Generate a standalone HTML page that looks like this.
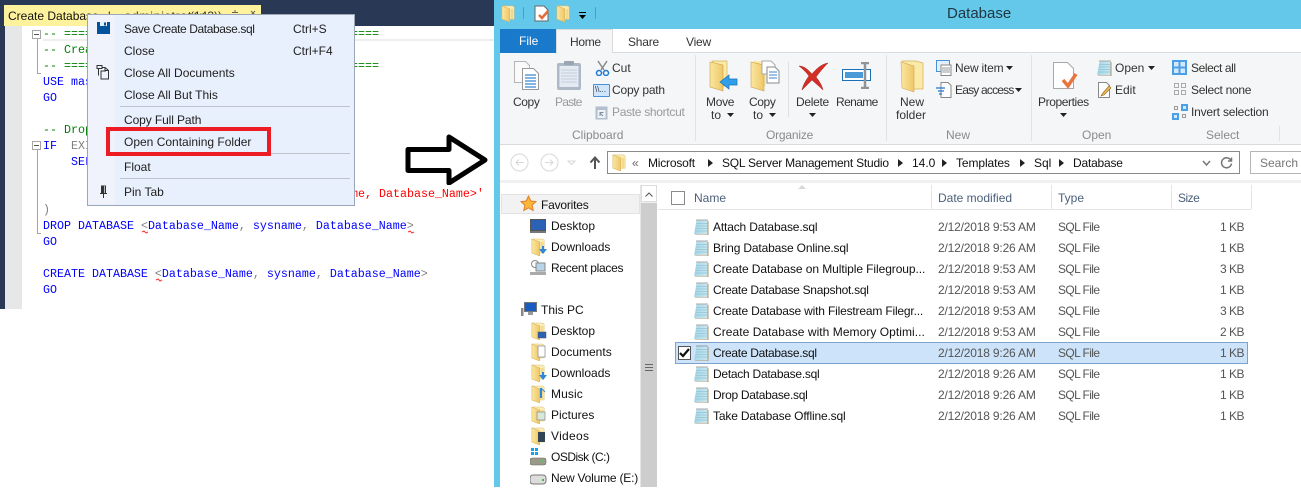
<!DOCTYPE html>
<html><head><meta charset="utf-8">
<style>
html,body{margin:0;padding:0;background:#fff}
#r{position:relative;width:1301px;height:493px;overflow:hidden;background:#fff;font-family:"Liberation Sans",sans-serif;font-size:12px;color:#1e1e1e}
#r div,#r span.t,#r svg.a{position:absolute}
.t{white-space:nowrap;line-height:16px}
.c{font-family:"Liberation Mono",monospace;font-size:11.67px;white-space:pre;line-height:16px;position:absolute;left:43px;color:#00f}
.g{color:#008000}.k{color:#00f}.p{color:#808080}.e{color:#f00}.b{color:#00f}
.m{color:#1e1e1e;font-size:12px}
.rb{color:#333;text-align:center}
.gr{color:#9a9a9a}
.lb{color:#8a8a8a}
.n{color:#111}
.h{color:#4c607a}
.d{color:#555;letter-spacing:-.18px}
.f{color:#555;letter-spacing:-.6px}
.z{color:#555;letter-spacing:-.5px;right:57px}
</style></head><body><div id="r">
<svg width="0" height="0" style="position:absolute"><defs>
<linearGradient id="fg" x1="0" x2="1"><stop offset="0" stop-color="#fbe6a0"/><stop offset="1" stop-color="#eec766"/></linearGradient>
<linearGradient id="sg" x1="0" x2="1"><stop offset="0" stop-color="#a6d6e6"/><stop offset="1" stop-color="#c9e6f0"/></linearGradient>
<symbol id="fo" viewBox="0 0 16 18" preserveAspectRatio="none"><path d="M1 1h12l2 1v13l-6 0z" fill="#fbeeb8" stroke="#dcc078" stroke-width=".6"/><path d="M1 1l9 3v14L1 15z" fill="url(#fg)" stroke="#d8b45e" stroke-width=".6"/><path d="M11 4h3v11h-3z" fill="#f4d98a"/></symbol>
<symbol id="sq" viewBox="0 0 16 16"><path d="M3.500 1.500h11v13.500H1z" fill="url(#sg)"/><path d="M3.300 4.500h11M3 7h11.300M2.500 9.500h11.800M2 12h12.300" stroke="#8fc5d8" stroke-width=".7"/><path d="M3.500 1h11" stroke="#555" stroke-dasharray="1 1"/><path d="M15 2v14H2" fill="none" stroke="#a8966e"/></symbol>
</defs></svg>

<!-- SSMS -->
<div style="left:0;top:0;width:494px;height:26px;background:#293955"></div>
<div style="left:0;top:0;width:5px;height:309px;background:#293955"></div>
<div style="left:4px;top:5px;width:257px;height:21px;background:#fff29d"></div>
<span class="t" style="left:8px;top:8px;color:#111">Create Database</span>
<span class="t" style="left:108px;top:8px;color:#333;letter-spacing:.8px">l - administrator</span>
<span class="t" style="left:190px;top:8px;color:#333">(143))</span>
<svg class="a" style="left:230px;top:10px" width="26" height="5" fill="none" stroke="#665"><path d="M2 2.500h6M5 0v3M21 1l4 4M25 1l-4 4"/></svg>
<div style="left:5px;top:26px;width:17px;height:283px;background:#e6e7e8"></div>
<div style="left:43px;top:26px;width:451px;height:15px;border-bottom:2px solid #eee;box-sizing:border-box"></div>
<div style="left:32px;top:30px;width:7px;height:7px;border:1px solid #a5a5a5;background:#fff"></div>
<div style="left:34px;top:34px;width:5px;height:1px;background:#555"></div>
<div style="left:37px;top:39px;width:1px;height:34px;background:#a5a5a5"></div>
<div style="left:37px;top:73px;width:4px;height:1px;background:#a5a5a5"></div>
<div style="left:32px;top:141px;width:7px;height:7px;border:1px solid #a5a5a5;background:#fff"></div>
<div style="left:34px;top:145px;width:5px;height:1px;background:#555"></div>
<div style="left:37px;top:150px;width:1px;height:83px;background:#a5a5a5"></div>
<div style="left:37px;top:233px;width:4px;height:1px;background:#a5a5a5"></div>
<div class="c g" style="top:26px">-- ====</div><div class="c g" style="top:26px;left:351px">====</div>
<div class="c g" style="top:42px">-- Crea</div>
<div class="c g" style="top:58px">-- ====</div><div class="c g" style="top:58px;left:351px">====</div>
<div class="c" style="top:74px">USE mas</div>
<div class="c" style="top:90px">GO</div>
<div class="c g" style="top:122px">-- Drop</div>
<div class="c" style="top:138px">IF  <span class="p">EXI</span></div>
<div class="c" style="top:154px">    SEL</div>
<div class="c e" style="top:186px;left:351px">me, Database_Name&gt;'</div>
<div class="c p" style="top:202px">)</div>
<div class="c" style="top:218px">DROP DATABASE <span class="p">&lt;</span>Database_Name<span class="p">,</span> sysname<span class="p">,</span> Database_Name<span class="p">&gt;</span></div>
<div class="c" style="top:234px">GO</div>
<div class="c" style="top:266px">CREATE DATABASE <span class="p">&lt;</span>Database_Name<span class="p">,</span> sysname<span class="p">,</span> Database_Name<span class="p">&gt;</span></div>
<div class="c" style="top:282px">GO</div>
<svg class="a" style="left:141px;top:230px" width="12" height="4"><path d="M1 2l2-1 2 2 2-1" stroke="#f33" fill="none"/></svg>
<svg class="a" style="left:407px;top:230px" width="12" height="4"><path d="M1 2l2-1 2 2 2-1" stroke="#f33" fill="none"/></svg>
<svg class="a" style="left:155px;top:278px" width="12" height="4"><path d="M1 2l2-1 2 2 2-1" stroke="#f33" fill="none"/></svg>

<!-- Context menu -->
<div style="left:87px;top:14px;width:266px;height:190px;background:#e9f0fd;border:1px solid #9ba7b7"></div>
<div style="left:88px;top:15px;width:27px;height:189px;background:#f0f3fc"></div>
<svg class="a" style="left:97px;top:22px" width="13" height="12" viewBox="0 0 13 12"><path d="M0 0h13v12H0z" fill="#00539c"/><path d="M3 0h7v4H3z" fill="#e9f0fd"/><path d="M7 .5h2v3H7z" fill="#00539c"/></svg>
<svg class="a" style="left:96px;top:64px" width="15" height="16" viewBox="0 0 15 16" fill="none" stroke="#333"><path d="M1 1.500h5v3H1z"/><path d="M2.500 4.500v7M6 1.500v2h3l3.500 3v8.500H5v-8h5M9 3.500v3h3.500"/></svg>
<span class="t m" style="left:124px;top:21px;letter-spacing:-.4px">Save Create Database.sql</span><span class="t m" style="left:293px;top:21px">Ctrl+S</span>
<span class="t m" style="left:124px;top:43px">Close</span><span class="t m" style="left:293px;top:43px">Ctrl+F4</span>
<span class="t m" style="left:124px;top:65px">Close All Documents</span>
<span class="t m" style="left:124px;top:87px">Close All But This</span>
<div style="left:120px;top:106px;width:230px;height:1px;background:#bec3cc"></div>
<span class="t m" style="left:124px;top:112px;letter-spacing:-.1px">Copy Full Path</span>
<span class="t m" style="left:124px;top:134px">Open Containing Folder</span>
<div style="left:120px;top:153px;width:230px;height:1px;background:#bec3cc"></div>
<span class="t m" style="left:124px;top:159px">Float</span>
<div style="left:120px;top:178px;width:230px;height:1px;background:#bec3cc"></div>
<span class="t m" style="left:124px;top:184px">Pin Tab</span>
<svg class="a" style="left:99px;top:185px" width="10" height="13" viewBox="0 0 10 13"><path d="M2 .5h5v8H2z" fill="#333"/><path d="M1 8h7v1H1zM4 9h1v4H4z" fill="#333"/><path d="M5 1h1v7H5z" fill="#bbb"/></svg>
<div style="left:106px;top:127px;width:165px;height:29px;border:4.500px solid #ed1c24;box-sizing:border-box"></div>

<!-- Arrow -->
<svg class="a" style="left:404px;top:133px" width="84" height="52" viewBox="0 0 84 52"><path d="M4 16.500h41V4l36 23-36 23V37.500H4z" fill="#fff" stroke="#000" stroke-width="5" stroke-linejoin="round"/></svg>

<!-- Explorer frame -->
<div style="left:494px;top:0;width:807px;height:29px;background:#63c8ea"></div>
<div style="left:494px;top:0;width:6px;height:487px;background:#63c8ea"></div>
<div style="left:500px;top:180px;width:801px;height:3px;background:#f0f0f0"></div>
<svg class="a" style="left:501px;top:5px" width="14" height="17"><use href="#fo" width="14" height="17"/></svg>
<div style="left:523px;top:7px;width:1px;height:12px;background:#6a95a6"></div>
<svg class="a" style="left:534px;top:5px" width="16" height="17" viewBox="0 0 16 17"><path d="M1 1h9l4 4v11H1z" fill="#fff" stroke="#666"/><path d="M5 10l3 3 6-7" fill="none" stroke="#e46b3c" stroke-width="2.500"/></svg>
<svg class="a" style="left:556px;top:5px" width="14" height="17"><use href="#fo" width="14" height="17"/></svg>
<div style="left:579px;top:12px;width:7px;height:1px;background:#000"></div>
<svg class="a" style="left:579px;top:15px" width="7" height="4"><path d="M0 0h7l-3.500 4z" fill="#000"/></svg>
<div style="left:595px;top:7px;width:1px;height:12px;background:#6a95a6"></div>
<span class="t" style="left:947px;top:5px;font-size:15px;line-height:18px;color:#1f3540">Database</span>

<!-- Tabs -->
<div style="left:500px;top:29px;width:56px;height:23px;background:#1979ca"></div>
<span class="t" style="left:519px;top:33px;color:#fff">File</span>
<div style="left:556px;top:29px;width:57px;height:24px;background:#f5f6f7;border:1px solid #dadbdc;border-bottom:0;box-sizing:border-box"></div>
<span class="t" style="left:570px;top:34px;color:#333;letter-spacing:-.3px">Home</span>
<span class="t" style="left:628px;top:34px;color:#333;letter-spacing:-.2px">Share</span>
<span class="t" style="left:686px;top:34px;color:#333;letter-spacing:-.2px">View</span>
<div style="left:500px;top:52px;width:56px;height:1px;background:#1979ca"></div>
<div style="left:613px;top:52px;width:688px;height:1px;background:#dadbdc"></div>
<div style="left:500px;top:53px;width:801px;height:91px;background:#f5f6f7;border-bottom:1px solid #dadbdc"></div>
<div style="left:695px;top:55px;width:1px;height:86px;background:#e2e3e4"></div>
<div style="left:886px;top:55px;width:1px;height:86px;background:#e2e3e4"></div>
<div style="left:1031px;top:55px;width:1px;height:86px;background:#e2e3e4"></div>
<div style="left:1279px;top:126px;width:1px;height:15px;background:#e2e3e4"></div>
<div style="left:788px;top:62px;width:1px;height:55px;background:#dfe0e1"></div>

<!-- Clipboard -->
<svg class="a" style="left:511px;top:60px" width="30" height="31" viewBox="0 0 30 31"><path d="M3.500 1.500h11l4 4v17h-15z" fill="#fafafa" stroke="#b5b5b5"/><path d="M11.500 8.500h11l5 5v16h-16z" fill="#fff" stroke="#999"/><path d="M14 15h11M14 18h11M14 21h11M14 24h11M14 27h11" stroke="#3a87cf" stroke-width="1.200"/></svg>
<span class="t rb" style="left:513px;top:94px;letter-spacing:-.4px">Copy</span>
<svg class="a" style="left:556px;top:60px" width="26" height="31" viewBox="0 0 26 31"><rect x="1" y="3" width="24" height="27" rx="2" fill="#aeb9c8"/><rect x="3.500" y="6" width="19" height="21" fill="#e4eaf2"/><path d="M5 10h16M5 13h16M5 16h16M5 19h16M5 22h16" stroke="#c4cfdc"/><rect x="8" y="1" width="10" height="4" rx="1" fill="#9aa5b2"/></svg>
<span class="t gr" style="left:555px;top:94px;letter-spacing:-.8px">Paste</span>
<svg class="a" style="left:595px;top:60px" width="15" height="16" viewBox="0 0 15 16" fill="none"><path d="M3 1l6 9M12 1L6 10" stroke="#8a8a8a" stroke-width="1.500"/><circle cx="4" cy="13" r="2.500" stroke="#1f78d1" stroke-width="1.500"/><circle cx="11" cy="13" r="2.500" stroke="#1f78d1" stroke-width="1.500"/></svg>
<span class="t rb" style="left:612px;top:60px">Cut</span>
<div style="left:593px;top:84px;width:15px;height:11px;background:#cfe5fb;border:1px solid #4a90d9;border-radius:1px"></div>
<span class="t" style="left:595px;top:82px;font-size:8px;color:#333">\\...</span>
<span class="t rb" style="left:612px;top:82px;letter-spacing:-.2px">Copy path</span>
<svg class="a" style="left:595px;top:105px" width="13" height="15" viewBox="0 0 13 15"><rect x=".5" y="1.500" width="12" height="13" fill="#b4bfcd"/><rect x="2.500" y="5" width="8" height="8" fill="#eef2f7"/><path d="M5 11V7.500h3.500M5 8l3 3" fill="none" stroke="#7d8ca0"/></svg>
<span class="t gr" style="left:612px;top:104px;letter-spacing:-.3px">Paste shortcut</span>
<span class="t lb" style="left:572px;top:127px">Clipboard</span>

<!-- Organize -->
<svg class="a" style="left:709px;top:60px" width="29" height="33" viewBox="0 0 29 33"><path d="M3 1h15v25H9z" fill="#fbe9a8" stroke="#d5b05c" stroke-width=".7"/><path d="M1 2l13 3v26L1 27z" fill="url(#fg)" stroke="#c9a04a" stroke-width=".6"/><path d="M11 22l9-7v4h8v6h-8v4z" fill="#2e9fe8" stroke="#1b71b8" stroke-width=".7"/></svg>
<span class="t rb" style="left:706px;top:94px;letter-spacing:-.3px">Move</span><span class="t rb" style="left:711px;top:107px">to</span>
<svg class="a" style="left:727px;top:113px" width="7" height="4"><path d="M0 0h7L3.500 4z" fill="#222"/></svg>
<svg class="a" style="left:750px;top:60px" width="30" height="33" viewBox="0 0 30 33"><path d="M3 1h13v25H9z" fill="#fbe9a8"/><path d="M1 2l13 3v26L1 27z" fill="url(#fg)" stroke="#c9a04a" stroke-width=".6"/><path d="M12 1h9l4 4v9H12z" fill="#fff" stroke="#aaa"/><path d="M17 7h8l4 4v12H17z" fill="#fff" stroke="#8a8a8a"/><path d="M19 12h8M19 15h8M19 18h8" stroke="#3a87cf"/></svg>
<span class="t rb" style="left:749px;top:94px;letter-spacing:-.4px">Copy</span><span class="t rb" style="left:753px;top:107px">to</span>
<svg class="a" style="left:769px;top:113px" width="7" height="4"><path d="M0 0h7L3.500 4z" fill="#222"/></svg>
<svg class="a" style="left:797px;top:61px" width="32" height="30" viewBox="0 0 32 30"><path d="M2 5C8 5 12 10 15 13 20 7 25 3 31 2 26 7 22 12 19 16 23 21 25 25 26 29 22 25 18 22 15 19 11 23 8 26 5 29 6 24 9 19 12 15 9 11 6 8 2 5z" fill="#d32f26" stroke="#a3231c" stroke-width=".5"/></svg>
<span class="t rb" style="left:796px;top:94px;letter-spacing:-.3px">Delete</span>
<svg class="a" style="left:809px;top:113px" width="7" height="4"><path d="M0 0h7L3.500 4z" fill="#222"/></svg>
<svg class="a" style="left:842px;top:62px" width="30" height="27" viewBox="0 0 30 27"><rect x=".5" y="7.500" width="28" height="11" fill="#fff" stroke="#1b71b8"/><rect x="3" y="10" width="18" height="6" fill="#4a9ad8"/><path d="M19 1h8M19 26h8M23 1v25" stroke="#8f9499" stroke-width="2.500" fill="none"/></svg>
<span class="t rb" style="left:836px;top:94px;letter-spacing:-.6px">Rename</span>
<span class="t lb" style="left:766px;top:127px;letter-spacing:-.2px">Organize</span>

<!-- New -->
<svg class="a" style="left:900px;top:60px" width="25" height="33" viewBox="0 0 25 33"><path d="M2 1h14l7 2v26H10z" fill="#fbe9a8" stroke="#d5b05c" stroke-width=".7"/><path d="M1 2l13 4v26L2 28z" fill="url(#fg)" stroke="#c9a04a" stroke-width=".5"/></svg>
<span class="t rb" style="left:900px;top:94px">New</span><span class="t rb" style="left:896px;top:107px">folder</span>
<svg class="a" style="left:936px;top:60px" width="16" height="16" viewBox="0 0 16 16"><rect x=".5" y=".5" width="13" height="11" fill="#e2f0fc" stroke="#4a90d9"/><path d="M5 5h10v10.500H5z" fill="#fff" stroke="#888"/><path d="M6 8h8M6 10h8M6 12h8" stroke="#999"/></svg>
<span class="t rb" style="left:955px;top:60px;letter-spacing:-.2px">New item</span>
<svg class="a" style="left:1006px;top:66px" width="7" height="4"><path d="M0 0h7L3.500 4z" fill="#222"/></svg>
<svg class="a" style="left:936px;top:82px" width="16" height="16" viewBox="0 0 16 16"><path d="M5 .5h7l3 3v12H5z" fill="#fff" stroke="#888"/><path d="M0 6h9M2 9h6M3 12h3" stroke="#1f78d1" stroke-width="1.200"/></svg>
<span class="t rb" style="left:955px;top:82px;letter-spacing:-.8px">Easy access</span>
<svg class="a" style="left:1015px;top:88px" width="7" height="4"><path d="M0 0h7L3.500 4z" fill="#222"/></svg>
<span class="t lb" style="left:946px;top:127px">New</span>

<!-- Open -->
<svg class="a" style="left:1052px;top:61px" width="26" height="30" viewBox="0 0 26 30"><path d="M1.500 1.500h14l6 6v20h-20z" fill="#fff" stroke="#a8a8a8"/><path d="M11 19l5 6 8-12" fill="none" stroke="#e8743e" stroke-width="3.500"/></svg>
<span class="t rb" style="left:1038px;top:94px;letter-spacing:-.4px">Properties</span>
<svg class="a" style="left:1060px;top:113px" width="7" height="4"><path d="M0 0h7L3.500 4z" fill="#222"/></svg>
<svg class="a" style="left:1096px;top:60px" width="16" height="16"><use href="#sq" width="16" height="16"/></svg>
<span class="t rb" style="left:1115px;top:60px">Open</span>
<svg class="a" style="left:1148px;top:66px" width="7" height="4"><path d="M0 0h7L3.500 4z" fill="#222"/></svg>
<svg class="a" style="left:1097px;top:82px" width="15" height="16" viewBox="0 0 15 16"><path d="M1.500.5h8l3 3v12h-11z" fill="#fff" stroke="#888"/><path d="M5 12l7-8 2 2-7 7-3 1z" fill="#eeb84a" stroke="#8a6a2a" stroke-width=".6"/></svg>
<span class="t rb" style="left:1115px;top:82px">Edit</span>
<span class="t lb" style="left:1082px;top:127px">Open</span>

<!-- Select -->
<svg class="a" style="left:1172px;top:60px" width="15" height="15" viewBox="0 0 15 15"><rect width="15" height="15" fill="#4aa0e8"/><rect x="2" y="2" width="4.500" height="4.500" fill="#d5e9fb"/><rect x="8.500" y="2" width="4.500" height="4.500" fill="#d5e9fb"/><rect x="2" y="8.500" width="4.500" height="4.500" fill="#d5e9fb"/><rect x="8.500" y="8.500" width="4.500" height="4.500" fill="#d5e9fb"/></svg>
<span class="t rb" style="left:1191px;top:60px;letter-spacing:-.4px">Select all</span>
<svg class="a" style="left:1174px;top:83px" width="12" height="12" viewBox="0 0 12 12" fill="none" stroke="#aaa"><rect x=".5" y=".5" width="4" height="4"/><rect x="7.500" y=".5" width="4" height="4"/><rect x=".5" y="7.500" width="4" height="4"/><rect x="7.500" y="7.500" width="4" height="4"/></svg>
<span class="t rb" style="left:1191px;top:82px;letter-spacing:-.3px">Select none</span>
<svg class="a" style="left:1172px;top:104px" width="16" height="16" viewBox="0 0 16 16"><rect x="9" y="0" width="7" height="7" fill="#4aa0e8"/><rect x="0" y="9" width="7" height="7" fill="#4aa0e8"/><rect x="2" y="11" width="3" height="3" fill="#d5e9fb"/><rect x="11" y="2" width="3" height="3" fill="#d5e9fb"/><rect x="2.500" y="2.500" width="3" height="3" fill="none" stroke="#999"/><rect x="10.500" y="10.500" width="3" height="3" fill="none" stroke="#999"/></svg>
<span class="t rb" style="left:1191px;top:104px;letter-spacing:-.2px">Invert selection</span>
<span class="t lb" style="left:1206px;top:127px">Select</span>

<!-- Address -->
<svg class="a" style="left:510px;top:153px" width="70" height="19" viewBox="0 0 70 19" fill="none" stroke="#d8d8d8"><circle cx="9.500" cy="9.500" r="8.500"/><circle cx="39.500" cy="9.500" r="8.500"/><path d="M14 9.500H6M9 6.500l-3 3 3 3M35 9.500h8M40 6.500l3 3-3 3"/><path d="M58 8h7l-3.500 3.500z" fill="#fff"/></svg>
<svg class="a" style="left:589px;top:156px" width="12" height="13" viewBox="0 0 12 13"><path d="M6 13V2M1.500 6.500L6 1.500l4.500 5" fill="none" stroke="#555" stroke-width="2"/></svg>
<div style="left:607px;top:151px;width:633px;height:23px;background:#fff;border:1px solid #8a8a8a;box-sizing:border-box"></div>
<svg class="a" style="left:612px;top:154px" width="14" height="17"><use href="#fo" width="14" height="17"/></svg>
<span class="t" style="left:632px;top:155px;color:#666">«</span>
<span class="t n" style="left:648px;top:155px;letter-spacing:-.2px">Microsoft</span>
<span class="t n" style="left:722px;top:155px;letter-spacing:-.22px">SQL Server Management Studio</span>
<span class="t n" style="left:912px;top:155px">14.0</span>
<span class="t n" style="left:956px;top:155px;letter-spacing:-.1px">Templates</span>
<span class="t n" style="left:1034px;top:155px">Sql</span>
<span class="t n" style="left:1073px;top:155px;letter-spacing:-.2px">Database</span>
<svg class="a" style="left:708px;top:159px" width="8" height="8"><path d="M0 0l5 4-5 4z" fill="#222"/></svg>
<svg class="a" style="left:898px;top:159px" width="6" height="8"><path d="M0 0l5 4-5 4z" fill="#222"/></svg>
<svg class="a" style="left:942px;top:159px" width="6" height="8"><path d="M0 0l5 4-5 4z" fill="#222"/></svg>
<svg class="a" style="left:1020px;top:159px" width="6" height="8"><path d="M0 0l5 4-5 4z" fill="#222"/></svg>
<svg class="a" style="left:1059px;top:159px" width="6" height="8"><path d="M0 0l5 4-5 4z" fill="#222"/></svg>
<svg class="a" style="left:1202px;top:155px" width="32" height="15" viewBox="0 0 32 15" fill="none" stroke="#777"><path d="M1 6l3.500 4L8 6" stroke-width="1.500"/><path d="M29 5.500a5 5 0 1 0 .5 3M29.500 2.500v3.500H26" stroke-width="1.500"/></svg>
<div style="left:1250px;top:151px;width:60px;height:23px;background:#fff;border:1px solid #b5b5b5;box-sizing:border-box"></div>
<span class="t" style="left:1260px;top:155px;color:#777">Search D</span>

<!-- Nav pane -->
<div style="left:501px;top:194px;width:139px;height:20px;background:#f2f2f2;border:1px solid #e2e2e2;box-sizing:border-box"></div>
<svg class="a" style="left:520px;top:195px" width="17" height="17" viewBox="0 0 17 17"><path d="M8.500 1l2.300 5 5.200.6-3.900 3.500 1.100 5.400-4.700-2.700-4.700 2.700 1.100-5.400L1 6.600 6.200 6z" fill="#f9b73c" stroke="#e07f2a"/></svg>
<span class="t n" style="left:541px;top:197px;letter-spacing:-.2px">Favorites</span>
<svg class="a" style="left:530px;top:219px" width="16" height="14" viewBox="0 0 16 14"><rect x=".5" y=".5" width="15" height="11" fill="#2b62b5" stroke="#555"/><rect y="12" width="16" height="2" fill="#777"/></svg>
<span class="t n" style="left:551px;top:218px">Desktop</span>
<svg class="a" style="left:531px;top:238px" width="16" height="18" viewBox="0 0 16 18"><use href="#fo" width="14" height="18"/><path d="M8 11h3V8h2v3h3l-4 5z" fill="#2e86d8"/></svg>
<span class="t n" style="left:551px;top:239px">Downloads</span>
<svg class="a" style="left:530px;top:260px" width="16" height="15" viewBox="0 0 16 15"><circle cx="5" cy="4" r="3.500" fill="#fff" stroke="#888"/><rect x="6" y="3" width="9" height="8" fill="#b8d4e8" stroke="#888"/><rect y="12" width="16" height="3" fill="#aaa"/></svg>
<span class="t n" style="left:551px;top:260px;letter-spacing:-.3px">Recent places</span>
<svg class="a" style="left:520px;top:302px" width="17" height="15" viewBox="0 0 17 15"><rect x="4.500" y=".5" width="12" height="9" fill="#1a5dc0" stroke="#777"/><rect x="1" y="6" width="2.500" height="8" fill="#888"/><rect x="8" y="10" width="5" height="3" fill="#999"/></svg>
<span class="t n" style="left:541px;top:302px">This PC</span>
<svg class="a" style="left:531px;top:322px" width="16" height="18" viewBox="0 0 16 18"><use href="#fo" width="14" height="18"/><rect x="7" y="10" width="8" height="6" fill="#2b62b5" stroke="#555" stroke-width=".5"/></svg>
<span class="t n" style="left:551px;top:323px">Desktop</span>
<svg class="a" style="left:531px;top:343px" width="16" height="18" viewBox="0 0 16 18"><use href="#fo" width="14" height="18"/><rect x="7" y="3" width="7" height="11" fill="#fff" stroke="#888" stroke-width=".7"/></svg>
<span class="t n" style="left:551px;top:344px">Documents</span>
<svg class="a" style="left:531px;top:364px" width="16" height="18" viewBox="0 0 16 18"><use href="#fo" width="14" height="18"/><path d="M8 11h3V8h2v3h3l-4 5z" fill="#2e86d8"/></svg>
<span class="t n" style="left:551px;top:365px">Downloads</span>
<svg class="a" style="left:531px;top:385px" width="16" height="18" viewBox="0 0 16 18"><use href="#fo" width="14" height="18"/><path d="M10 3v10" stroke="#2e86d8" stroke-width="2"/><path d="M10 3l4 4" stroke="#2e86d8"/></svg>
<span class="t n" style="left:551px;top:386px;letter-spacing:.1px">Music</span>
<svg class="a" style="left:531px;top:406px" width="16" height="18" viewBox="0 0 16 18"><use href="#fo" width="14" height="18"/><rect x="6" y="6" width="8" height="8" fill="#d8e8d8" stroke="#888" stroke-width=".7"/></svg>
<span class="t n" style="left:551px;top:407px">Pictures</span>
<svg class="a" style="left:531px;top:427px" width="16" height="18" viewBox="0 0 16 18"><use href="#fo" width="14" height="18"/><rect x="7" y="5" width="7" height="10" fill="#345"/></svg>
<span class="t n" style="left:551px;top:428px;letter-spacing:.3px">Videos</span>
<svg class="a" style="left:530px;top:447px" width="17" height="19" viewBox="0 0 17 19"><path d="M1 1h3v3H1zM5 1h3v3H5zM1 5h3v3H1zM5 5h3v3H5z" fill="#0ea5e9"/><rect y="11" width="16" height="7" rx="2" fill="#9a9a8a" stroke="#666" stroke-width=".5"/><rect x="11" y="13" width="3" height="2" fill="#5c5"/></svg>
<span class="t n" style="left:551px;top:449px;letter-spacing:-.5px">OSDisk (C:)</span>
<svg class="a" style="left:530px;top:473px" width="17" height="12" viewBox="0 0 17 12"><rect y="2" width="16" height="9" rx="3" fill="#ddd" stroke="#777"/><rect x="12" y="6" width="2" height="2" fill="#5a5"/></svg>
<span class="t n" style="left:551px;top:470px;letter-spacing:-.2px">New Volume (E:)</span>
<!-- Scrollbar -->
<div style="left:640px;top:185px;width:17px;height:302px;background:#f0f0f0;border-left:1px solid #e5e5e5;box-sizing:border-box"></div>
<div style="left:641px;top:185px;width:16px;height:17px;background:#fff;border:1px solid #dcdcdc;box-sizing:border-box"></div>
<svg class="a" style="left:645px;top:192px" width="8" height="5"><path d="M.5 4.500l3.500-3.500 3.500 3.500" fill="none" stroke="#555"/></svg>
<div style="left:641px;top:203px;width:16px;height:284px;background:#cdcdcd"></div>
<div style="left:645px;top:364px;width:8px;height:1px;background:#666;box-shadow:0 3px 0 #666,0 6px 0 #666"></div>

<!-- File list -->
<div style="left:658px;top:185px;width:593px;height:24px;background:#fff;border-bottom:1px solid #e5e5e5"></div>
<div style="left:931px;top:185px;width:1px;height:24px;background:#e5e5e5"></div>
<div style="left:1051px;top:185px;width:1px;height:24px;background:#e5e5e5"></div>
<div style="left:1171px;top:185px;width:1px;height:24px;background:#e5e5e5"></div>
<div style="left:1251px;top:185px;width:1px;height:24px;background:#e5e5e5"></div>
<div style="left:671px;top:191px;width:12px;height:12px;border:1px solid #8a8a8a;background:#fff"></div>
<svg class="a" style="left:798px;top:185px" width="8" height="5"><path d="M0 4l4-4 4 4z" fill="#d8d8d8"/></svg>
<span class="t h" style="left:694px;top:190px">Name</span>
<span class="t h" style="left:938px;top:190px">Date modified</span>
<span class="t h" style="left:1058px;top:190px">Type</span>
<span class="t h" style="left:1178px;top:190px;letter-spacing:-.5px">Size</span>
<div style="left:675px;top:342px;width:573px;height:22px;background:#cce3f9;border:1px solid #7da2ce;box-sizing:border-box"></div>
<div style="left:678px;top:346px;width:11px;height:12px;border:1px solid #555;background:#fff"></div>
<svg class="a" style="left:679px;top:348px" width="12" height="10"><path d="M1 5l3 3 6-7" fill="none" stroke="#111" stroke-width="2.200"/></svg>
<svg class="a" style="left:693px;top:219px" width="16" height="16"><use href="#sq" width="16" height="16"/></svg>
<svg class="a" style="left:693px;top:240px" width="16" height="16"><use href="#sq" width="16" height="16"/></svg>
<svg class="a" style="left:693px;top:261px" width="16" height="16"><use href="#sq" width="16" height="16"/></svg>
<svg class="a" style="left:693px;top:282px" width="16" height="16"><use href="#sq" width="16" height="16"/></svg>
<svg class="a" style="left:693px;top:303px" width="16" height="16"><use href="#sq" width="16" height="16"/></svg>
<svg class="a" style="left:693px;top:324px" width="16" height="16"><use href="#sq" width="16" height="16"/></svg>
<svg class="a" style="left:693px;top:345px" width="16" height="16"><use href="#sq" width="16" height="16"/></svg>
<svg class="a" style="left:693px;top:366px" width="16" height="16"><use href="#sq" width="16" height="16"/></svg>
<svg class="a" style="left:693px;top:387px" width="16" height="16"><use href="#sq" width="16" height="16"/></svg>
<svg class="a" style="left:693px;top:408px" width="16" height="16"><use href="#sq" width="16" height="16"/></svg>

<span class="t n" style="left:713px;top:219px;letter-spacing:-.16px">Attach Database.sql</span><span class="t d" style="left:938px;top:219px">2/12/2018 9:53 AM</span><span class="t f" style="left:1058px;top:219px">SQL File</span><span class="t z" style="top:219px">1 KB</span>
<span class="t n" style="left:713px;top:240px;letter-spacing:-.16px">Bring Database Online.sql</span><span class="t d" style="left:938px;top:240px">2/12/2018 9:26 AM</span><span class="t f" style="left:1058px;top:240px">SQL File</span><span class="t z" style="top:240px">1 KB</span>
<span class="t n" style="left:713px;top:261px;letter-spacing:-.08px">Create Database on Multiple Filegroup...</span><span class="t d" style="left:938px;top:261px">2/12/2018 9:53 AM</span><span class="t f" style="left:1058px;top:261px">SQL File</span><span class="t z" style="top:261px">3 KB</span>
<span class="t n" style="left:713px;top:282px;letter-spacing:-.28px">Create Database Snapshot.sql</span><span class="t d" style="left:938px;top:282px">2/12/2018 9:53 AM</span><span class="t f" style="left:1058px;top:282px">SQL File</span><span class="t z" style="top:282px">1 KB</span>
<span class="t n" style="left:713px;top:303px;letter-spacing:-.18px">Create Database with Filestream Filegr...</span><span class="t d" style="left:938px;top:303px">2/12/2018 9:53 AM</span><span class="t f" style="left:1058px;top:303px">SQL File</span><span class="t z" style="top:303px">3 KB</span>
<span class="t n" style="left:713px;top:324px;letter-spacing:.05px">Create Database with Memory Optimi...</span><span class="t d" style="left:938px;top:324px">2/12/2018 9:53 AM</span><span class="t f" style="left:1058px;top:324px">SQL File</span><span class="t z" style="top:324px">2 KB</span>
<span class="t n" style="left:713px;top:345px;letter-spacing:-.3px">Create Database.sql</span><span class="t d" style="left:938px;top:345px">2/12/2018 9:26 AM</span><span class="t f" style="left:1058px;top:345px">SQL File</span><span class="t z" style="top:345px">1 KB</span>
<span class="t n" style="left:713px;top:366px;letter-spacing:-.26px">Detach Database.sql</span><span class="t d" style="left:938px;top:366px">2/12/2018 9:26 AM</span><span class="t f" style="left:1058px;top:366px">SQL File</span><span class="t z" style="top:366px">1 KB</span>
<span class="t n" style="left:713px;top:387px;letter-spacing:-.29px">Drop Database.sql</span><span class="t d" style="left:938px;top:387px">2/12/2018 9:26 AM</span><span class="t f" style="left:1058px;top:387px">SQL File</span><span class="t z" style="top:387px">1 KB</span>
<span class="t n" style="left:713px;top:408px;letter-spacing:-.16px">Take Database Offline.sql</span><span class="t d" style="left:938px;top:408px">2/12/2018 9:26 AM</span><span class="t f" style="left:1058px;top:408px">SQL File</span><span class="t z" style="top:408px">1 KB</span>
</div></body></html>
